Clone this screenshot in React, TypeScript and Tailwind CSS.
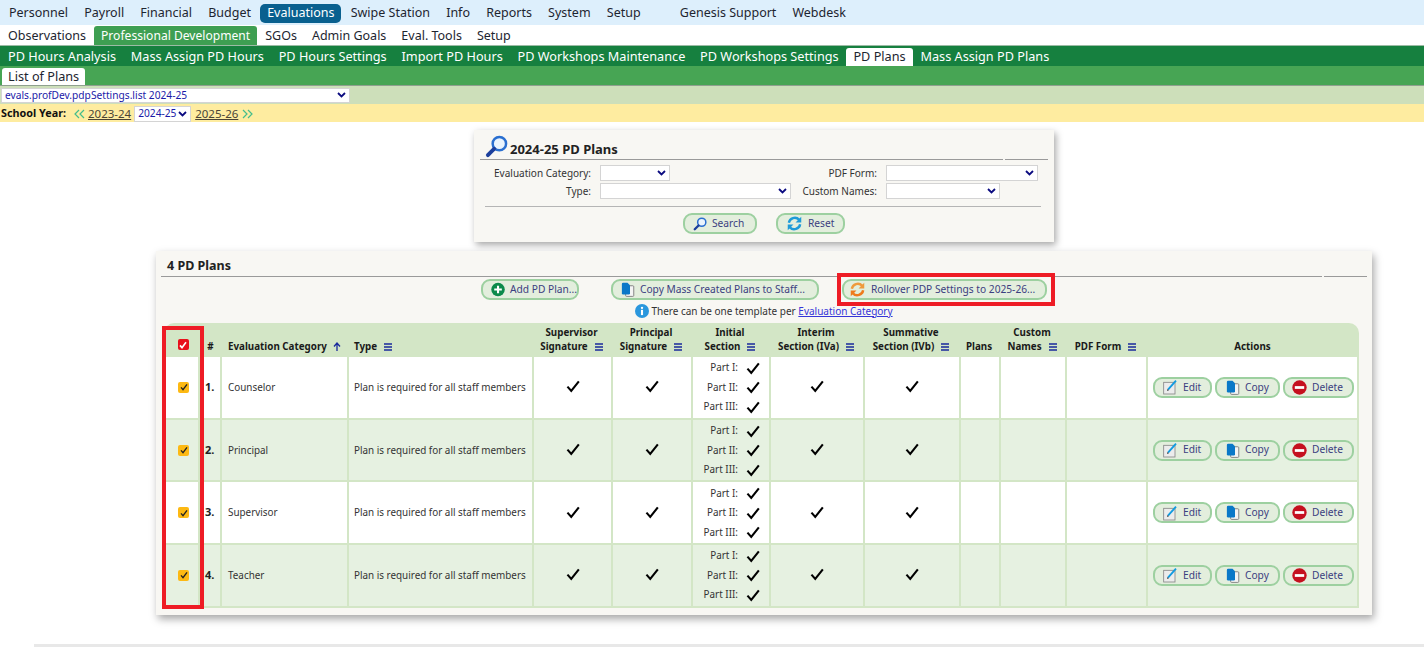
import React from 'react';

const FONT = 'font-["Noto_Sans",sans-serif]';

const SearchIcon: React.FC<{ size: number }> = ({ size }) => (
    <svg width={size} height={size} viewBox="0 0 24 24" fill="none">
        <circle cx="15" cy="9" r="7" fill="#eaf4fd" stroke="#2a6fd0" strokeWidth="2.6" />
        <path d="M9.5 14.5 L3 21" stroke="#1c3f9c" strokeWidth="4" strokeLinecap="round" />
    </svg>
);

const ResetIcon: React.FC<{ color1?: string; color2?: string }> = ({ color1 = '#1e9bd8', color2 = '#1e9bd8' }) => (
    <svg width="17" height="17" viewBox="0 0 24 24" fill="none">
        <path d="M4 11 A8.5 8.5 0 0 1 18.5 6.5" stroke={color1} strokeWidth="3.4" />
        <path d="M21.5 2.5 V10.5 H13.5 Z" fill={color1} />
        <path d="M20 13 A8.5 8.5 0 0 1 5.5 17.5" stroke={color2} strokeWidth="3.4" />
        <path d="M2.5 21.5 V13.5 H10.5 Z" fill={color2} />
    </svg>
);

const PlusIcon = () => (
    <svg width="15" height="15" viewBox="0 0 24 24">
        <circle cx="12" cy="12" r="11.5" fill="#0b8a4a" />
        <path d="M12 5.5 V18.5 M5.5 12 H18.5" stroke="#fff" strokeWidth="3.6" />
    </svg>
);

const CopyIcon = () => (
    <svg width="15" height="15" viewBox="0 0 24 24">
        <rect x="9" y="6" width="13" height="17" rx="1.5" fill="#f4f4f4" stroke="#777" strokeWidth="1.4" />
        <path d="M3 3 Q3 1 5 1 H12 L16 5 V18 Q16 20 14 20 H5 Q3 20 3 18 Z" fill="#0a78c8" />
    </svg>
);

const EditIcon = () => (
    <svg width="16" height="16" viewBox="0 0 24 24" fill="none">
        <rect x="2.5" y="5" width="17" height="17.5" fill="#ececec" stroke="#8a8a8a" strokeWidth="1.3" />
        <path d="M9 16 L21 2.5" stroke="#109be0" strokeWidth="2.8" />
        <path d="M7.5 18 L8 15 L10.5 17 Z" fill="#444" />
    </svg>
);

const DeleteIcon = () => (
    <svg width="15" height="15" viewBox="0 0 24 24">
        <circle cx="12" cy="12" r="11.5" fill="#c5101f" />
        <rect x="4.5" y="9.8" width="15" height="4.4" fill="#fff" />
    </svg>
);

const InfoIcon = () => (
    <svg width="14" height="14" viewBox="0 0 24 24">
        <circle cx="12" cy="12" r="12" fill="#2a97dd" />
        <rect x="10.2" y="10" width="3.6" height="9" fill="#fff" />
        <circle cx="12" cy="6.5" r="2" fill="#fff" />
    </svg>
);

const Check: React.FC<{ size?: number }> = ({ size = 14 }) => (
    <svg width={size} height={size} viewBox="0 0 24 24" fill="none">
        <path d="M2.5 13 L9 20.5 L22 4" stroke="#000" strokeWidth="3.6" />
    </svg>
);

const SortLines = () => (
    <svg width="8" height="8" viewBox="0 0 8 8" className="inline-block ml-[7px] align-[-0.5px]">
        <path d="M0 1 H8 M0 4 H8 M0 7 H8" stroke="#1a2a9c" strokeWidth="1.3" />
    </svg>
);

const Chevron = () => (
    <svg width="9" height="6" viewBox="0 0 9 6" fill="none" className="shrink-0">
        <path d="M1 1 L4.5 4.5 L8 1" stroke="#0b0b80" strokeWidth="1.8" />
    </svg>
);

const DoubleChevron: React.FC<{ flip?: boolean }> = ({ flip }) => (
    <svg width="11" height="10" viewBox="0 0 11 10" fill="none" className={flip ? 'rotate-180' : ''}>
        <path d="M5 1 L1 5 L5 9 M10 1 L6 5 L10 9" stroke="#45bd8c" strokeWidth="1.2" />
    </svg>
);

const SelectBox: React.FC<{ width: string; label?: string; h?: string }> = ({ width, label, h = 'h-4' }) => (
    <div className={`${width} ${h} bg-white border border-[#d4d4d4] flex items-center justify-between pl-[3px] pr-[3px] text-[10.2px] text-[#1a1aa8]`}>
        <span className="leading-none whitespace-nowrap">{label}</span>
        <Chevron />
    </div>
);

const Btn: React.FC<{ icon: React.ReactNode; label: string; className?: string }> = ({ icon, label, className = '' }) => (
    <div className={`h-[21px] flex items-center gap-[5px] rounded-[9px] border-2 border-[#9dd0a0] bg-[#e3eedd] text-[10.2px] text-[#3b4080] whitespace-nowrap ${className}`}>
        {icon}
        <span>{label}</span>
    </div>
);

const topNav = ['Personnel', 'Payroll', 'Financial', 'Budget', 'Evaluations', 'Swipe Station', 'Info', 'Reports', 'System', 'Setup'];
const subNav = ['PD Hours Analysis', 'Mass Assign PD Hours', 'PD Hours Settings', 'Import PD Hours', 'PD Workshops Maintenance', 'PD Workshops Settings', 'PD Plans', 'Mass Assign PD Plans'];
const rows = ['Counselor', 'Principal', 'Supervisor', 'Teacher'];
const widths = [34, 22, 127, 185, 79, 80, 78, 94, 96, 40, 66, 81, 213];

const Th: React.FC<{ children?: React.ReactNode; className?: string }> = ({ children, className = '' }) => (
    <th className={`align-bottom pb-[3px] font-bold text-[9.8px] leading-[14px] text-[#1a1a1a] text-center ${className}`}>{children}</th>
);

const App: React.FC = () => {
    return (
        <div className={`${FONT} w-[1424px] h-[647px] overflow-hidden relative bg-white text-[#1d2530]`}>
            {/* menus */}
            <div className="h-[25px] bg-[#ddeffc] flex items-center pl-[2px] pt-[1px] text-[12.5px]">
                {topNav.map(item => (
                    <div key={item} className={`px-[7px] h-[19px] leading-[18px] rounded-[5px] mr-[2.2px] ${item === 'Evaluations' ? 'bg-[#09608f] text-white px-[6px]' : ''}`}>{item}</div>
                ))}
                <div className="ml-[23px] px-[7px]">Genesis Support</div>
                <div className="ml-[2px] px-[7px]">Webdesk</div>
            </div>
            <div className="h-[20px] bg-white flex items-end pl-[1px] text-[12.5px]">
                {['Observations', 'Professional Development', 'SGOs', 'Admin Goals', 'Eval. Tools', 'Setup'].map(item => (
                    <div key={item} className={`px-[7px] h-[19px] leading-[19px] mr-[1px] rounded-t-[3px] ${item === 'Professional Development' ? 'bg-[#3e9f52] text-white px-[6px] text-[12.1px]' : ''}`}>{item}</div>
                ))}
            </div>
            <div className="h-[21px] bg-[#16803f] border-t border-[#9cbba5] flex items-end pl-[1px] text-[12.7px] text-white">
                {subNav.map(item => (
                    <div key={item} className={`px-[7px] mr-[0.8px] h-[18px] leading-[17px] rounded-t-[3px] ${item === 'PD Plans' ? 'bg-white text-[#1d2530]' : ''}`}>{item}</div>
                ))}
            </div>
            <div className="h-[20px] bg-[#47a554] border-b border-[#8fa08f] flex items-end pl-[2px] text-[12.7px]">
                <div className="px-[6px] h-[17px] leading-[17px] bg-white rounded-t-[3px]">List of Plans</div>
            </div>
            <div className="h-[18px] bg-[#cddfba] flex items-center pl-[1px]">
                <SelectBox width="w-[349px]" h="h-[15px]" label="evals.profDev.pdpSettings.list 2024-25" />
            </div>
            <div className="h-[18px] bg-[#feeca0] flex items-center pl-[1px] pt-[1px] text-[11.5px]">
                <span className="font-bold text-[10.8px] text-[#111] w-[73px]">School Year:</span>
                <DoubleChevron />
                <span className="underline text-[#4a4436] ml-[3px] mr-[3px]">2023-24</span>
                <SelectBox width="w-[57px]" h="h-[16px]" label="2024-25" />
                <span className="underline text-[#4a4436] ml-[4px] mr-[4px]">2025-26</span>
                <DoubleChevron flip />
            </div>

            <div className="flex flex-col items-center pl-[104px]">
                {/* search panel */}
                <div className="mt-[8px] w-[580px] h-[112px] bg-[#f8f7f3] shadow-[2px_3px_7px_rgba(0,0,0,0.35)] px-[11px]">
                    <div className="flex -mx-[5px] h-[30px]">
                        <div className="flex-1 flex items-end border-b border-[#9a9a9a] pb-[1px] pl-[5px] gap-[2px]">
                            <SearchIcon size={23} />
                            <span className="font-bold text-[13px] text-[#222] leading-[18px]">2024-25 PD Plans</span>
                        </div>
                        <div className="w-[43px] ml-[2px] border-b border-[#9a9a9a]" />
                    </div>
                    <div className="mt-[5px] grid grid-cols-[106px_191px_77px_1fr] gap-x-[9px] gap-y-[2px] items-center text-[10px] text-[#333]">
                        <div className="text-right whitespace-nowrap">Evaluation Category:</div>
                        <SelectBox width="w-[70px]" />
                        <div className="text-right">PDF Form:</div>
                        <SelectBox width="w-[152px]" />
                        <div className="text-right">Type:</div>
                        <SelectBox width="w-[191px]" />
                        <div className="text-right whitespace-nowrap">Custom Names:</div>
                        <SelectBox width="w-[114px]" />
                    </div>
                    <div className="mt-[7px] border-t border-[#b5b5b5] mr-[2px]" />
                    <div className="mt-[6px] flex justify-center gap-[19px]">
                        <Btn className="w-[74px] pl-[8px]" icon={<SearchIcon size={14} />} label="Search" />
                        <Btn className="w-[69px] pl-[8px] gap-[4px]" icon={<ResetIcon />} label="Reset" />
                    </div>
                </div>

                {/* list panel */}
                <div className="mt-[9px] w-[1216px] h-[364px] bg-[#f8f7f3] shadow-[2px_4px_8px_rgba(0,0,0,0.35)] px-[5px]">
                    <div className="flex h-[26px]">
                        <div className="flex-1 flex items-end border-b border-[#9a9a9a] pl-[6px] pb-[2px]">
                            <span className="font-bold text-[12.5px] text-[#222] leading-[16px]">4 PD Plans</span>
                        </div>
                        <div className="w-[43px] ml-[2px] border-b border-[#9a9a9a]" />
                    </div>
                    <div className="mt-[2px] flex pl-[320px]">
                        <Btn className="w-[98px] pl-[8px] gap-[4px]" icon={<PlusIcon />} label="Add PD Plan..." />
                        <Btn className="ml-[32px] w-[208px] pl-[7px] gap-[5px]" icon={<CopyIcon />} label="Copy Mass Created Plans to Staff..." />
                        <Btn className="ml-[23px] w-[205px] pl-[5px] gap-[2px]" icon={<ResetIcon color1="#ef9a3c" color2="#ef7a1c" />} label="Rollover PDP Settings to 2025-26..." />
                    </div>
                    <div className="mt-[3px] h-[16px] flex items-center justify-center gap-[2px] text-[10px] text-[#333]">
                        <InfoIcon />
                        <span>There can be one template per <span className="underline text-[#3535d8]">Evaluation Category</span></span>
                    </div>
                    <table className="mt-[4px] ml-[3px] table-fixed border-separate border-spacing-0 w-[1195px] bg-[#d3e6c6] rounded-t-[10px]">
                        <colgroup>
                            {widths.map((w, i) => <col key={i} style={{ width: w }} />)}
                        </colgroup>
                        <thead>
                            <tr className="h-[34px]">
                                <Th>
                                    <div className="flex justify-center pb-[4px] pl-[4px]">
                                        <div className="w-[11px] h-[11px] rounded-[2px] bg-[#e8101c] flex items-center justify-center">
                                            <svg width="8" height="8" viewBox="0 0 24 24" fill="none"><path d="M3 13 L9 20 L21 4" stroke="#fff" strokeWidth="5" /></svg>
                                        </div>
                                    </div>
                                </Th>
                                <Th className="pl-[3px]">#</Th>
                                <Th className="text-left pl-[8px]">Evaluation Category
                                    <svg width="8" height="9" viewBox="0 0 8 9" className="inline-block ml-[6px] align-[-1px]"><path d="M4 9 V2 M1 4.5 L4 1 L7 4.5" stroke="#1a2a9c" strokeWidth="1.3" fill="none" /></svg>
                                </Th>
                                <Th className="text-left pl-[7px]">Type<SortLines /></Th>
                                <Th>Supervisor<br />Signature<SortLines /></Th>
                                <Th>Principal<br />Signature<SortLines /></Th>
                                <Th>Initial<br />Section<SortLines /></Th>
                                <Th>Interim<br />Section (IVa)<SortLines /></Th>
                                <Th>Summative<br />Section (IVb)<SortLines /></Th>
                                <Th>Plans</Th>
                                <Th>Custom<br />Names<SortLines /></Th>
                                <Th>PDF Form<SortLines /></Th>
                                <Th>Actions</Th>
                            </tr>
                        </thead>
                        <tbody>
                            {rows.map((name, i) => (
                                <tr key={name} className={`h-[62.7px] text-[9.9px] text-[#333] ${i % 2 === 0 ? 'bg-white' : 'bg-[#e6f1e1]'}`}>
                                    <td className="border-l-2 border-b-2 border-[#d3e6c6]">
                                        <div className="flex justify-center pl-[3px]">
                                            <div className="w-[11px] h-[11px] rounded-[2px] bg-[#fdb913] flex items-center justify-center">
                                                <svg width="8" height="8" viewBox="0 0 24 24" fill="none"><path d="M3 13 L9 20 L21 4" stroke="#222" strokeWidth="4" /></svg>
                                            </div>
                                        </div>
                                    </td>
                                    <td className="border-l-2 border-b-2 border-[#d3e6c6] font-bold text-[11px] text-[#222] pl-[5px]">{i + 1}.</td>
                                    <td className="border-l-2 border-b-2 border-[#d3e6c6] pl-[6px]">{name}</td>
                                    <td className="border-l-2 border-b-2 border-[#d3e6c6] pl-[5px] whitespace-nowrap">Plan is required for all staff members</td>
                                    <td className="border-l-2 border-b-2 border-[#d3e6c6]"><div className="flex justify-center -mt-[2px]"><Check /></div></td>
                                    <td className="border-l-2 border-b-2 border-[#d3e6c6]"><div className="flex justify-center -mt-[2px]"><Check /></div></td>
                                    <td className="border-l-2 border-b-2 border-[#d3e6c6]">
                                        <div className="flex flex-col items-end pr-[9px] gap-[4.5px]">
                                            {['Part I:', 'Part II:', 'Part III:'].map(part => (
                                                <div key={part} className="flex items-center gap-[8px] h-[15px]">
                                                    <span>{part}</span>
                                                    <Check />
                                                </div>
                                            ))}
                                        </div>
                                    </td>
                                    <td className="border-l-2 border-b-2 border-[#d3e6c6]"><div className="flex justify-center -mt-[2px]"><Check /></div></td>
                                    <td className="border-l-2 border-b-2 border-[#d3e6c6]"><div className="flex justify-center -mt-[2px]"><Check /></div></td>
                                    <td className="border-l-2 border-b-2 border-[#d3e6c6]" />
                                    <td className="border-l-2 border-b-2 border-[#d3e6c6]" />
                                    <td className="border-l-2 border-b-2 border-[#d3e6c6]" />
                                    <td className="border-x-2 border-b-2 border-[#d3e6c6]">
                                        <div className="flex items-center pl-[5px] gap-[3px]">
                                            <Btn className="w-[59px] pl-[7px]" icon={<EditIcon />} label="Edit" />
                                            <Btn className="w-[65px] pl-[8px]" icon={<CopyIcon />} label="Copy" />
                                            <Btn className="w-[71px] pl-[7px]" icon={<DeleteIcon />} label="Delete" />
                                        </div>
                                    </td>
                                </tr>
                            ))}
                        </tbody>
                    </table>
                </div>
            </div>

            <div className="absolute left-[34px] right-0 top-[644px] h-[3px] bg-[#e8e8e8]" />

            {/* red annotation boxes */}
            <div className="absolute left-[162px] top-[326px] w-[42px] h-[283px] border-[4px] border-[#ee1c25]" />
            <div className="absolute left-[837px] top-[273px] w-[218px] h-[33px] border-[4px] border-[#ee1c25]" />
        </div>
    );
};

export default App;
